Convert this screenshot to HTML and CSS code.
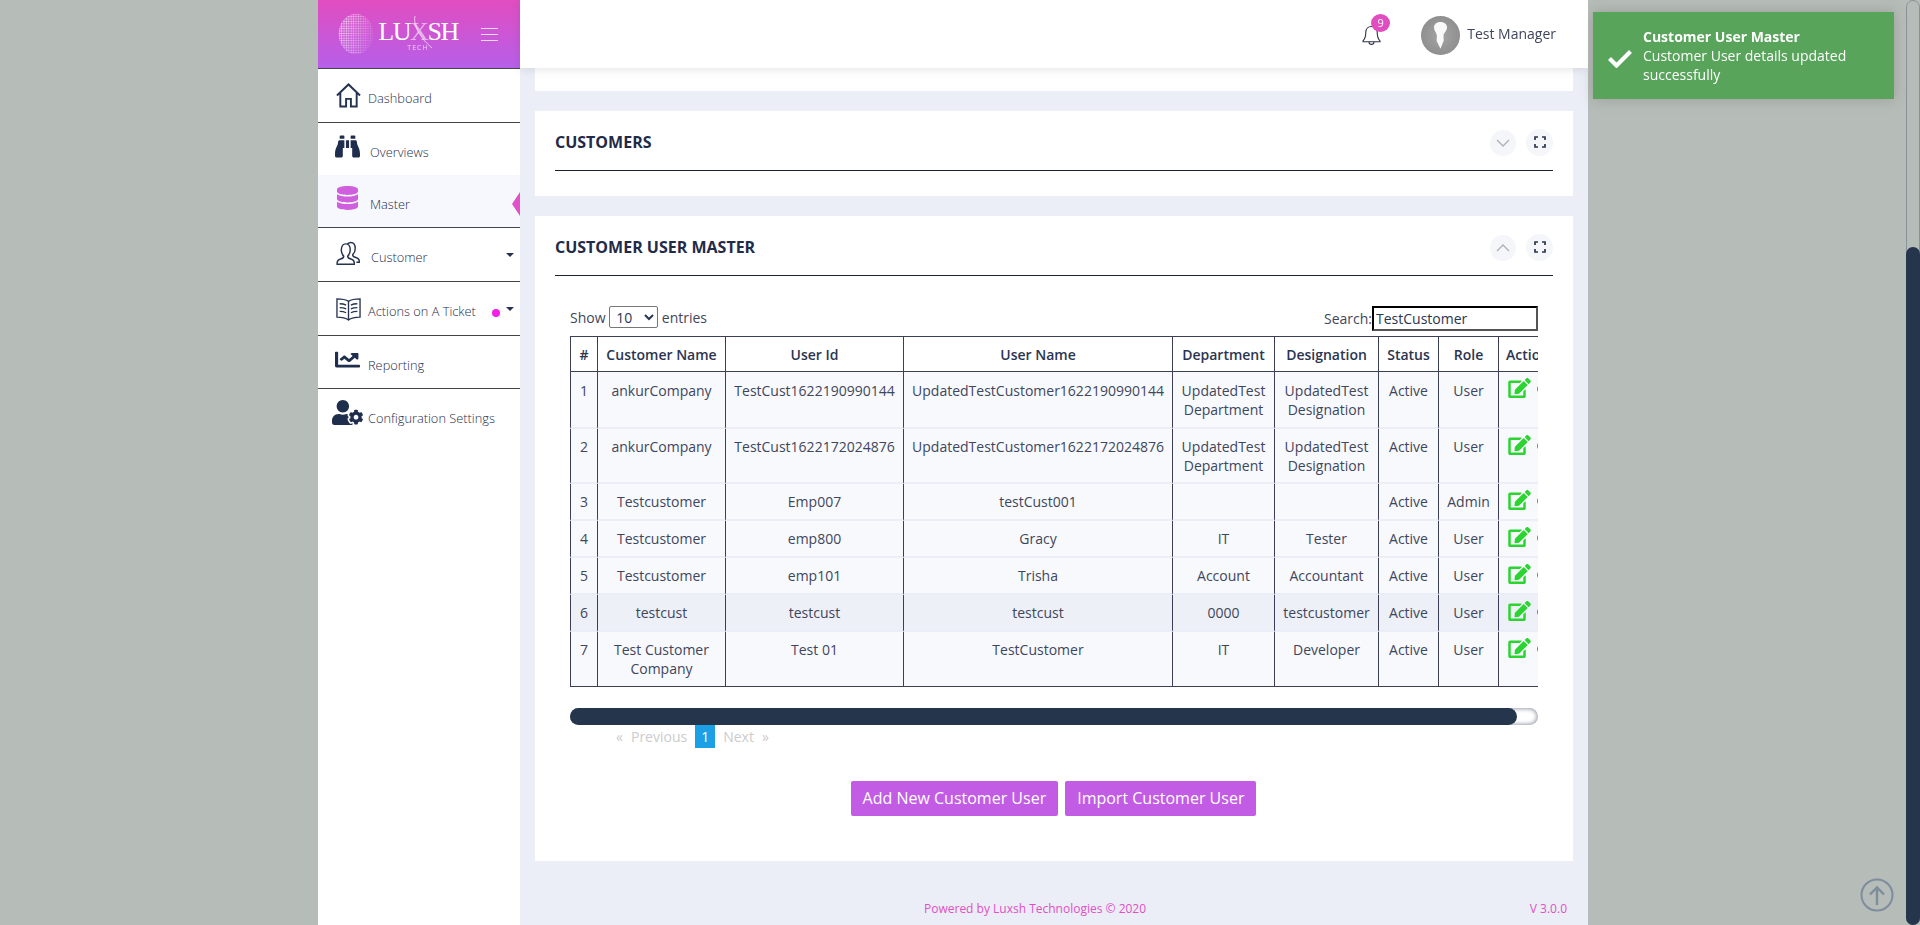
FILE: index.html
```html
<!DOCTYPE html>
<html>

<head>
  <title>Customer User Master</title>
  <link rel="stylesheet" href="styles.css">
</head>

<body>
  <svg class="defs" width="0" height="0">
    <symbol id="i-edit" viewBox="0 0 576 512"><path d="M402.600 83.200l90.200 90.200c3.800 3.800 3.800 10 0 13.800L274.400 405.600l-92.800 10.300c-12.400 1.400-22.900-9.100-21.500-21.500l10.300-92.800L388.800 83.200c3.800-3.800 10-3.800 13.800 0zm162-22.900l-48.800-48.800c-15.200-15.200-39.900-15.200-55.200 0l-35.400 35.400c-3.800 3.800-3.800 10 0 13.800l90.200 90.200c3.800 3.800 10 3.800 13.800 0l35.400-35.400c15.200-15.300 15.200-40 0-55.200zM384 346.200V448H64V128h229.800c3.200 0 6.200-1.300 8.500-3.500l40-40c7.600-7.600 2.200-20.500-8.500-20.500H48C21.500 64 0 85.500 0 112v352c0 26.500 21.500 48 48 48h352c26.500 0 48-21.500 48-48V306.200c0-10.700-12.900-16-20.500-8.500l-40 40c-2.200 2.300-3.500 5.300-3.500 8.500z"></path></symbol>
    <symbol id="i-expand" viewBox="0 0 12 12"><path d="M1 4V1h3M8 1h3v3M11 8v3H8M4 11H1V8" fill="none" stroke="#2a3550" stroke-width="1.700"></path></symbol>
  </svg>

  <div class="shell">
    <aside class="sidebar">
      <div class="brand">
        <svg class="brand-globe" width="36" height="42" viewBox="0 0 36 42">
          <defs>
            <pattern id="dots" width="2.4" height="2.4" patternUnits="userSpaceOnUse">
              <circle cx="1.2" cy="1.2" r="0.85" fill="#fff"></circle>
            </pattern>
            <linearGradient id="fade" x1="0" x2="1" y1="0.3" y2="0.6">
              <stop offset="0" stop-color="#fff"></stop>
              <stop offset="0.55" stop-color="#fff" stop-opacity="0.55"></stop>
              <stop offset="1" stop-color="#fff" stop-opacity="0.12"></stop>
            </linearGradient>
            <mask id="fade-mask"><ellipse cx="18" cy="21" rx="17.5" ry="20.5" fill="url(#fade)"></ellipse></mask>
          </defs>
          <ellipse cx="18" cy="21" rx="17.5" ry="20.5" fill="url(#dots)" mask="url(#fade-mask)"></ellipse>
        </svg>
        <div class="brand-name">
          <div class="brand-word">LU<span class="brand-x">X</span>SH</div>
          <div class="brand-tech">TECH</div>
          <svg class="brand-swoosh" width="20" height="34" viewBox="0 0 20 34"><path d="M2 1c-2 9 4 21 17 32" fill="none" stroke="#fff" stroke-opacity="0.8" stroke-width="0.8"></path></svg>
        </div>
        <div class="burger"><i></i><i></i><i></i></div>
      </div>

      <nav class="menu">
        <a class="menu-row row-home">
          <svg class="ico ico-home" viewBox="0 0 26 25"><path d="M1 12.500 13 1l12 11.500M4.500 10v14h6v-8h5v8h6V10" fill="none" stroke="#24334f" stroke-width="2"></path></svg>
          <span>Dashboard</span>
        </a>
        <a class="menu-row row-overview">
          <svg class="ico ico-bin" viewBox="0 0 512 512"><path d="M416 48c0-8.840-7.160-16-16-16h-64c-8.840 0-16 7.160-16 16v48h96V48zM63.910 159.990C61.400 253.840 3.460 274.220 0 404v44c0 17.670 14.330 32 32 32h96c17.670 0 32-14.330 32-32V288h32V128H95.840c-17.630 0-31.450 14.370-31.930 31.990zm384.180 0c-.48-17.620-14.300-31.990-31.930-31.990H320v160h32v160c0 17.670 14.330 32 32 32h96c17.670 0 32-14.330 32-32v-44c-3.460-129.780-61.400-150.160-63.910-244.010zM176 32h-64c-8.840 0-16 7.160-16 16v48h96V48c0-8.840-7.160-16-16-16zm48 256h64V128h-64v160z"></path></svg>
          <span>Overviews</span>
        </a>
        <a class="menu-row row-master active">
          <svg class="ico ico-db" viewBox="0 0 448 512"><path d="M448 73.143v45.714C448 159.143 347.667 192 224 192S0 159.143 0 118.857V73.143C0 32.857 100.333 0 224 0s224 32.857 224 73.143zM448 176v102.857C448 319.143 347.667 352 224 352S0 319.143 0 278.857V176c48.125 33.143 136.208 48.572 224 48.572S399.874 209.143 448 176zm0 160v102.857C448 479.143 347.667 512 224 512S0 479.143 0 438.857V336c48.125 33.143 136.208 48.572 224 48.572S399.874 369.143 448 336z"></path></svg>
          <span>Master</span>
        </a>
        <a class="menu-row row-customer">
          <svg class="ico ico-users" viewBox="0 0 26 25"><path d="M1.200 23.600c-.4-3.200.8-4.600 3.600-5.400 2.400-.7 3.400-1.400 3.200-3-1.800-1.600-2.600-3.800-2.500-6.400C5.700 4.600 7.400 2.500 10.200 2.500c2.900 0 4.600 2.100 4.600 6.300 0 2.600-.8 4.800-2.600 6.400-.2 1.600.8 2.300 3.200 3 2.800.8 4 2.200 3.600 5.400zM11.500 3.200C12.200 1.800 13.600 1 15.400 1c2.900 0 4.600 2.100 4.600 6.300 0 2.600-.8 4.800-2.600 6.400-.2 1.600.8 2.300 3.200 3 2.800.8 4 2.200 3.600 4.900h-3" fill="none" stroke="#24334f" stroke-width="1.500"></path></svg>
          <span>Customer</span>
          <b class="caret"></b>
        </a>
        <a class="menu-row row-actions">
          <svg class="ico ico-book" viewBox="0 0 26 25"><path d="M13 4C10 2 5 1.500 1 1.500v19c4 0 9 .7 12 3 3-2.300 8-3 12-3v-19C21 1.500 16 2 13 4zm0 0v19.500M3.800 6.500c2 0 4.800.4 6.700 1.400M3.800 10.500c2 0 4.800.4 6.700 1.400M3.800 14.500c2 0 4.800.4 6.700 1.400M22.200 6.500c-2 0-4.800.4-6.700 1.400M22.200 10.500c-2 0-4.800.4-6.700 1.400M22.200 14.500c-2 0-4.800.4-6.700 1.400" fill="none" stroke="#24334f" stroke-width="1.400"></path></svg>
          <span>Actions on A Ticket</span>
          <b class="dot"></b>
          <b class="caret"></b>
        </a>
        <a class="menu-row row-report">
          <svg class="ico ico-chart" viewBox="0 0 512 512" preserveAspectRatio="none"><path d="M496 384H64V80c0-8.840-7.160-16-16-16H16C7.160 64 0 71.160 0 80v336c0 17.670 14.330 32 32 32h464c8.840 0 16-7.160 16-16v-32c0-8.840-7.160-16-16-16zM464 96H345.940c-21.380 0-32.090 25.850-16.970 40.970l32.400 32.400L288 242.750l-73.370-73.370c-12.500-12.500-32.760-12.500-45.250 0l-68.690 68.690c-6.250 6.250-6.250 16.380 0 22.630l22.620 22.620c6.250 6.250 16.380 6.250 22.630 0L192 237.250l73.370 73.370c12.500 12.500 32.760 12.500 45.250 0l96-96 32.400 32.400c15.120 15.120 40.970 4.410 40.970-16.970V112c0-8.840-7.160-16-16-16z"></path></svg>
          <span>Reporting</span>
        </a>
        <a class="menu-row row-config">
          <svg class="ico ico-cog" viewBox="0 0 640 512"><path d="M610.500 373.300c2.600-14.100 2.600-28.500 0-42.600l25.800-14.900c3-1.700 4.300-5.200 3.300-8.500-6.700-21.600-18.200-41.200-33.200-57.400-2.300-2.500-6-3.100-9-1.400l-25.800 14.900c-10.900-9.300-23.400-16.500-36.900-21.300v-29.800c0-3.400-2.400-6.400-5.700-7.100-22.300-5-45-4.800-66.200 0-3.300.7-5.700 3.700-5.700 7.100v29.800c-13.500 4.800-26 12-36.900 21.300l-25.800-14.900c-2.900-1.700-6.700-1.100-9 1.400-15 16.200-26.500 35.800-33.200 57.400-1 3.300.4 6.800 3.300 8.500l25.800 14.900c-2.600 14.100-2.600 28.500 0 42.600l-25.800 14.900c-3 1.700-4.300 5.200-3.300 8.500 6.700 21.600 18.200 41.100 33.200 57.400 2.300 2.500 6 3.100 9 1.400l25.800-14.900c10.900 9.300 23.400 16.500 36.900 21.300v29.800c0 3.400 2.400 6.400 5.700 7.100 22.300 5 45 4.800 66.200 0 3.300-.7 5.700-3.700 5.700-7.100v-29.800c13.500-4.800 26-12 36.900-21.300l25.800 14.900c2.900 1.700 6.700 1.100 9-1.400 15-16.200 26.500-35.800 33.200-57.400 1-3.300-.4-6.800-3.300-8.500l-25.800-14.900zM496 400.500c-26.800 0-48.500-21.800-48.500-48.500s21.800-48.500 48.500-48.500 48.500 21.800 48.500 48.500-21.700 48.500-48.500 48.500zM224 256c70.700 0 128-57.300 128-128S294.700 0 224 0 96 57.300 96 128s57.300 128 128 128zm201.200 226.500c-2.300-1.200-4.600-2.600-6.800-3.900l-7.900 4.600c-6 3.400-12.800 5.300-19.600 5.300-10.900 0-21.400-4.600-28.900-12.600-18.300-19.800-32.300-43.900-40.200-69.600-5.500-17.700 1.900-36.400 17.900-45.700l7.900-4.600c-.1-2.600-.1-5.200 0-7.800l-7.900-4.600c-16-9.200-23.400-28-17.900-45.700.9-2.900 2.200-5.800 3.200-8.700-3.800-.3-7.500-1.200-11.400-1.200h-16.700c-22.200 10.200-46.900 16-72.900 16s-50.600-5.800-72.900-16h-16.700C60.200 288 0 348.200 0 422.400V464c0 26.500 21.500 48 48 48h352c10.100 0 19.500-3.200 27.200-8.500-1.200-3.800-2-7.700-2-11.800v-9.200z"></path></svg>
          <span>Configuration Settings</span>
        </a>
      </nav>
    </aside>

    <div class="main">
      <header class="topbar">
        <div class="bell">
          <svg width="19" height="20" viewBox="0 0 19 20"><path d="M9.500 1.500c-3.500 0-5.700 2.600-5.700 5.800 0 5-1 6.800-2.800 8.500v1h17v-1c-1.800-1.700-2.800-3.500-2.800-8.500 0-3.200-2.200-5.800-5.700-5.800zM7 17c0 1.500 1 2.400 2.500 2.400S12 18.500 12 17" fill="none" stroke="#2b3347" stroke-width="1.100"></path></svg>
          <span class="badge">9</span>
        </div>
        <div class="avatar">
          <svg width="39" height="39" viewBox="0 0 39 39"><path d="M19.500 6c-4 0-6.500 2.400-6.500 5.500 0 3.400 2.600 5.200 2.900 8 .2 2.800-1.100 5 .6 7.300l3 6 2.400-6c1.700-2.300.4-4.500.6-7.300.3-2.800 3.500-4.600 3.500-8C26 8.400 23.500 6 19.500 6z" fill="#fff" fill-opacity="0.95"></path></svg>
        </div>
        <span class="username">Test Manager</span>
      </header>

      <div class="content">
        <div class="card card-stub"></div>

        <section class="card card-closed">
          <div class="card-head">
            <h4>CUSTOMERS</h4>
            <span class="round-btn">
              <svg width="14" height="8" viewBox="0 0 14 8"><path d="M1 1l6 6 6-6" fill="none" stroke="#aeb0b5" stroke-width="1.300"></path></svg>
            </span>
            <span class="round-btn btn-expand">
              <svg width="12" height="12"><use href="#i-expand"></use></svg>
            </span>
          </div>
        </section>

        <section class="card">
          <div class="card-head">
            <h4>CUSTOMER USER MASTER</h4>
            <span class="round-btn">
              <svg width="14" height="8" viewBox="0 0 14 8"><path d="M1 7l6-6 6 6" fill="none" stroke="#aeb0b5" stroke-width="1.300"></path></svg>
            </span>
            <span class="round-btn btn-expand">
              <svg width="12" height="12"><use href="#i-expand"></use></svg>
            </span>
          </div>

          <div class="card-body">
            <div class="dt-controls">
              <label>Show
                <select class="dt-length"><option>10</option></select>
                entries</label>
              <label class="dt-search">Search:<input type="text" value="TestCustomer"></label>
            </div>

            <div class="dt-clip">
              <table class="dt">
                <colgroup>
                  <col class="c-num"><col class="c-cust"><col class="c-id"><col class="c-name"><col class="c-dept"><col class="c-desig"><col class="c-status"><col class="c-role"><col class="c-act">
                </colgroup>
                <thead>
                  <tr><th>#</th><th>Customer Name</th><th>User Id</th><th>User Name</th><th>Department</th><th>Designation</th><th>Status</th><th>Role</th><th class="th-act">Action</th></tr>
                </thead>
                <tbody>
                  <tr>
                    <td>1</td><td>ankurCompany</td><td>TestCust1622190990144</td><td>UpdatedTestCustomer1622190990144</td><td>UpdatedTest Department</td><td>UpdatedTest Designation</td><td>Active</td><td>User</td>
                    <td class="acts"><svg class="edit"><use href="#i-edit"></use></svg><b class="del"></b></td>
                  </tr>
                  <tr>
                    <td>2</td><td>ankurCompany</td><td>TestCust1622172024876</td><td>UpdatedTestCustomer1622172024876</td><td>UpdatedTest Department</td><td>UpdatedTest Designation</td><td>Active</td><td>User</td>
                    <td class="acts"><svg class="edit"><use href="#i-edit"></use></svg><b class="del"></b></td>
                  </tr>
                  <tr>
                    <td>3</td><td>Testcustomer</td><td>Emp007</td><td>testCust001</td><td></td><td></td><td>Active</td><td>Admin</td>
                    <td class="acts"><svg class="edit"><use href="#i-edit"></use></svg><b class="del"></b></td>
                  </tr>
                  <tr>
                    <td>4</td><td>Testcustomer</td><td>emp800</td><td>Gracy</td><td>IT</td><td>Tester</td><td>Active</td><td>User</td>
                    <td class="acts"><svg class="edit"><use href="#i-edit"></use></svg><b class="del"></b></td>
                  </tr>
                  <tr>
                    <td>5</td><td>Testcustomer</td><td>emp101</td><td>Trisha</td><td>Account</td><td>Accountant</td><td>Active</td><td>User</td>
                    <td class="acts"><svg class="edit"><use href="#i-edit"></use></svg><b class="del"></b></td>
                  </tr>
                  <tr class="hovered">
                    <td>6</td><td>testcust</td><td>testcust</td><td>testcust</td><td>0000</td><td>testcustomer</td><td>Active</td><td>User</td>
                    <td class="acts"><svg class="edit"><use href="#i-edit"></use></svg><b class="del"></b></td>
                  </tr>
                  <tr>
                    <td>7</td><td>Test Customer Company</td><td>Test 01</td><td>TestCustomer</td><td>IT</td><td>Developer</td><td>Active</td><td>User</td>
                    <td class="acts"><svg class="edit"><use href="#i-edit"></use></svg><b class="del"></b></td>
                  </tr>
                </tbody>
              </table>
            </div>

            <div class="hscroll"><div class="hscroll-thumb"></div></div>

            <div class="pager">
              <span>«</span><span>Previous</span><span class="page-on">1</span><span>Next</span><span>»</span>
            </div>

            <div class="buttons">
              <button type="button">Add New Customer User</button>
              <button type="button">Import Customer User</button>
            </div>
          </div>
        </section>

        <footer class="foot">
          <span class="foot-copy">Powered by Luxsh Technologies © 2020</span>
          <span class="foot-ver">V 3.0.0</span>
        </footer>
      </div>
    </div>
  </div>

  <div class="toast">
    <svg class="toast-check" width="24" height="19" viewBox="0 0 24 19"><path d="M1.500 9.500l7 7L22.500 2.500" fill="none" stroke="#fff" stroke-width="4.200"></path></svg>
    <div>
      <div class="toast-title">Customer User Master</div>
      <div>Customer User details updated successfully</div>
    </div>
  </div>

  <div class="page-scroll"><div class="page-thumb"></div></div>

  <div class="to-top">
    <svg width="34" height="34" viewBox="0 0 34 34"><circle cx="17" cy="17" r="15.500" fill="none" stroke="#7d8d9d" stroke-width="2"></circle><path d="M17 27V10M10 16.500 17 9.500l7 7" fill="none" stroke="#7d8d9d" stroke-width="2.400"></path></svg>
  </div>
</body>

</html>
```

FILE: styles.css
```css
* {
  box-sizing: border-box;
}

html,
body {
  margin: 0;
  height: 925px;
  overflow: hidden;
}

body {
  background-color: #b6bcb7;
  font-family: "Open Sans", "Noto Sans", sans-serif;
  font-size: 14px;
  color: #2b3550;
}

.defs {
  position: absolute;
}

.shell {
  display: flex;
  width: 1270px;
  height: 925px;
  margin-left: 318px;
  overflow: hidden;
}

/* sidebar */
.sidebar {
  width: 202px;
  flex: none;
  background-color: #fff;
}

.brand {
  display: flex;
  align-items: center;
  height: 68px;
  padding: 0 0 0 20px;
  background: linear-gradient(#e14dc0, #b65fe9);
}

.brand-globe {
  flex: none;
}

.brand-name {
  position: relative;
  display: flex;
  flex-direction: column;
  align-items: center;
  margin: 5px 0 0 4px;
  width: 80px;
  color: #fff;
}

.brand-word {
  font-family: "Liberation Serif", serif;
  font-size: 26px;
  letter-spacing: -1.4px;
  line-height: 22px;
}

.brand-x {
  opacity: 0.55;
}

.brand-tech {
  margin-top: 1px;
  font-size: 7px;
  letter-spacing: 1px;
  line-height: 8px;
  opacity: 0.7;
}

.brand-swoosh {
  position: absolute;
  left: 35px;
  top: -6px;
}

.burger {
  display: flex;
  flex-direction: column;
  gap: 5px;
  margin-left: 23px;
  width: 17px;
}

.burger i {
  display: block;
  height: 1px;
  background-color: #f4dcf7;
}

.menu-row {
  position: relative;
  display: flex;
  align-items: center;
  height: 54px;
  border-top: 1px solid #454545;
  font-size: 12.8px;
  font-weight: 300;
  color: #1f2e4d;
  padding-left: 17px;
}

.menu-row span {
  padding-top: 5px;
  white-space: nowrap;
}

.row-overview {
  height: 53px;
}

.row-master {
  height: 52px;
  border-top: none;
  background-color: #f6f8fd;
}

.row-report,
.row-config {
  height: 53px;
}

.ico {
  flex: none;
  fill: #1f2e4d;
}

.ico-home {
  width: 25px;
  height: 25px;
  margin: 0 7px 0 1px;
}

.ico-bin {
  width: 25px;
  height: 25px;
  margin: -5px 10px 0 0;
}

.ico-db {
  width: 21px;
  height: 24px;
  margin: -6px 12px 0 2px;
  fill: #cf5fdc;
}

.ico-users {
  width: 25px;
  height: 25px;
  margin: -2px 10px 0 1px;
}

.ico-book {
  width: 25px;
  height: 25px;
  margin: 2px 7px 0 1px;
}

.ico-chart {
  width: 25px;
  height: 21px;
  margin: -6px 8px 0 0;
}

.ico-cog {
  width: 31px;
  height: 25px;
  margin: -6px 5px 0 -3px;
}

.caret {
  position: absolute;
  right: 6px;
  top: 25px;
  border-left: 4px solid transparent;
  border-right: 4px solid transparent;
  border-top: 4px solid #263250;
}

.dot {
  position: absolute;
  left: 174px;
  top: 27px;
  width: 8px;
  height: 8px;
  border-radius: 50%;
  background-color: #f51fe8;
}

.active::after {
  content: "";
  position: absolute;
  right: 0;
  top: 17px;
  border-top: 12px solid transparent;
  border-bottom: 12px solid transparent;
  border-right: 8px solid #e052c8;
}

/* top bar */
.main {
  flex: 1;
  min-width: 0;
  display: flex;
  flex-direction: column;
  background-color: #ebeef6;
}

.topbar {
  position: relative;
  z-index: 1;
  display: flex;
  align-items: center;
  justify-content: flex-end;
  height: 68px;
  flex: none;
  padding-right: 32px;
  background-color: #fff;
  box-shadow: 0 2px 8px rgba(60, 60, 80, 0.12);
}

.bell {
  position: relative;
  height: 20px;
  margin: 2px 40px 0 0;
}

.badge {
  position: absolute;
  left: 9px;
  top: -11px;
  width: 19px;
  height: 18px;
  border-radius: 50%;
  background-color: #e04dc0;
  color: #fff;
  font-size: 11px;
  line-height: 18px;
  text-align: center;
}

.avatar {
  width: 39px;
  height: 39px;
  margin: 2px 7px 0 0;
  border-radius: 50%;
  background: radial-gradient(#a5a5a5, #868686);
}

.username {
  margin-top: -2px;
  font-size: 14px;
  color: #3f465c;
}

/* cards */
.content {
  flex: 1;
  display: flex;
  flex-direction: column;
  gap: 20px;
  padding: 0 15px;
}

.card {
  background-color: #fff;
}

.card-stub {
  height: 23px;
}

.card-closed {
  height: 85px;
}

.card-head {
  display: flex;
  align-items: center;
  gap: 10px;
  height: 60px;
  margin: 0 20px;
  border-bottom: 1px solid #1b2233;
}

.card-head h4 {
  flex: 1;
  margin: 0;
  padding-top: 3px;
  font-size: 16px;
  font-weight: 700;
  color: #1f2b48;
}

.round-btn {
  display: flex;
  align-items: center;
  justify-content: center;
  width: 26px;
  height: 26px;
  margin-top: 4px;
  border-radius: 50%;
  background-color: #f5f6fa;
}

.btn-expand {
  width: 27px;
  height: 27px;
  margin-top: 3px;
}

.card-body {
  padding: 30px 35px 45px;
}

/* datatable */
.dt-controls {
  display: flex;
  justify-content: space-between;
  height: 30px;
  color: #3f465c;
}

.dt-length {
  width: 49px;
  height: 22px;
  margin: 0;
  padding: 0 0 0 2px;
  border: 1px solid #777;
  border-radius: 2px;
  background-color: #fff;
  font-family: inherit;
  font-size: 14px;
  color: #2b3550;
}

.dt-search input {
  width: 166px;
  height: 25px;
  padding: 0 2px;
  border: 2px inset #555;
  font-family: inherit;
  font-size: 14px;
  color: #2b3550;
}

.dt-clip {
  overflow: hidden;
  width: 968px;
}

.dt {
  width: 1041px;
  table-layout: fixed;
  border-collapse: separate;
  border-spacing: 0;
  text-align: center;
  line-height: 19px;
}

.c-num { width: 28px; }
.c-cust { width: 128px; }
.c-id { width: 178px; }
.c-name { width: 269px; }
.c-dept { width: 102px; }
.c-desig { width: 104px; }
.c-status { width: 60px; }
.c-role { width: 60px; }
.c-act { width: 112px; }

.dt th {
  height: 36px;
  padding: 0 2px;
  border: solid #3a3f55;
  border-width: 1px 1px 1px 0;
  background-color: #fff;
  font-weight: 600;
  font-size: 14px;
  color: #2b3550;
}

.dt .th-act {
  text-align: left;
  padding-left: 7px;
}

.dt td {
  padding: 8px 2px;
  vertical-align: top;
  border-right: 1px solid #3a3f55;
  border-bottom: 2px solid #ebeef6;
  background-color: #f7f9fd;
  color: #3f465c;
}

.dt tbody tr:first-child td {
  padding-top: 9px;
}

.dt tbody tr:nth-child(2) td {
  padding-bottom: 7px;
}

.dt th:first-child,
.dt td:first-child {
  border-left: 1px solid #3a3f55;
}

.dt tbody tr:last-child td {
  border-bottom: 1px solid #3a3f55;
}

.dt .hovered td {
  background-color: #edf0f7;
}

.dt .acts,
.dt tbody tr:first-child .acts {
  text-align: left;
  padding: 6px 0 0 9px;
  white-space: nowrap;
}

.edit {
  display: inline-block;
  width: 23px;
  height: 20px;
  fill: #2bd431;
  vertical-align: top;
}

.del {
  display: inline-block;
  width: 10px;
  height: 10px;
  margin: 6px 0 0 6px;
  border: 2px solid #d4622a;
  border-radius: 50%;
  vertical-align: top;
}

.hscroll {
  width: 968px;
  height: 17px;
  margin-top: 21px;
  border-radius: 9px;
  background-color: #fff;
  box-shadow: inset 0 0 5px #6f7488;
}

.hscroll-thumb {
  width: 947px;
  height: 17px;
  border-radius: 9px;
  background-color: #25364c;
}

.pager {
  display: flex;
  align-items: center;
  gap: 8px;
  height: 23px;
  padding-left: 46px;
  color: #ccc;
  font-size: 14px;
}

.page-on {
  width: 20px;
  line-height: 23px;
  text-align: center;
  background-color: #1b9fe5;
  color: #fff;
}

.buttons {
  display: flex;
  justify-content: center;
  gap: 7px;
  margin-top: 33px;
  padding-right: 1px;
}

.buttons button {
  height: 35px;
  padding: 0 12px 2px;
  border: none;
  border-radius: 2px;
  background-color: #c25ce4;
  color: #fff;
  font-family: inherit;
  font-size: 16px;
}

/* footer */
.foot {
  position: relative;
  height: 40px;
  font-size: 12px;
  color: #e24fc6;
}

.foot-copy {
  position: absolute;
  left: 389px;
  top: 19px;
}

.foot-ver {
  position: absolute;
  right: 6px;
  top: 19px;
}

/* overlays */
.toast {
  position: fixed;
  left: 1593px;
  top: 12px;
  width: 301px;
  height: 87px;
  display: flex;
  align-items: center;
  gap: 11px;
  padding-left: 15px;
  background-color: #57a45a;
  color: #fff;
  font-size: 14px;
  line-height: 19px;
  box-shadow: 0 0 12px rgba(100, 100, 100, 0.35);
}

.toast-check {
  flex: none;
  margin-top: 6px;
}

.toast-title {
  font-weight: 700;
}

.page-scroll {
  position: fixed;
  left: 1906px;
  top: 0;
  width: 14px;
  height: 925px;
  border: 1px solid #8b9199;
  border-radius: 7px;
}

.page-thumb {
  position: absolute;
  left: -1px;
  right: -1px;
  top: 246px;
  bottom: -1px;
  border-radius: 7px;
  background-color: #25364c;
}

.to-top {
  position: fixed;
  left: 1860px;
  top: 878px;
  width: 34px;
  height: 34px;
}
```
